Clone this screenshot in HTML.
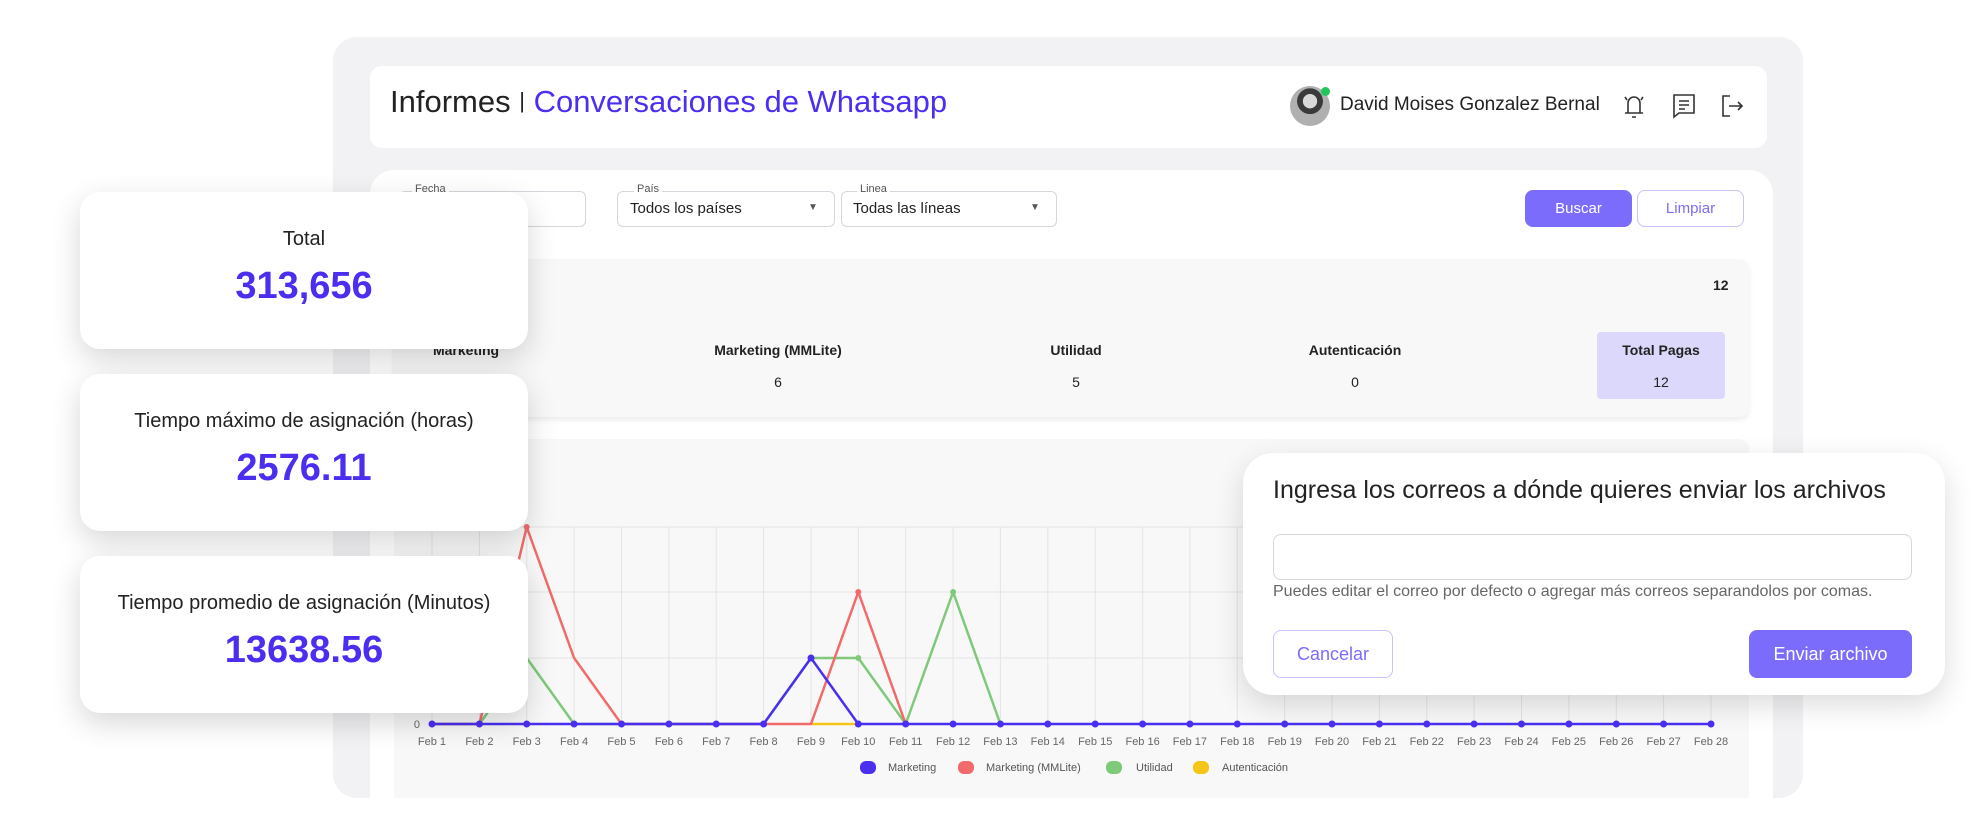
<!DOCTYPE html>
<html><head><meta charset="utf-8"><style>
*{box-sizing:border-box;margin:0;padding:0}
body{width:1980px;height:836px;background:#fff;position:relative;overflow:hidden;font-family:"Liberation Sans",sans-serif;color:#222}
.a{position:absolute}
.outer{left:333px;top:37px;width:1470px;height:761px;background:#f2f2f4;border-radius:24px}
.hdr{left:370px;top:66px;width:1397px;height:82px;background:#fff;border-radius:12px}
.filt{left:370px;top:170px;width:1403px;height:628px;background:#fff;border-radius:24px 24px 0 0}
.inp{border:1px solid #d6d6dc;border-radius:6px;height:36px;background:#fff}
.lbl{font-size:11px;color:#555;background:#fff;padding:0 3px}
.sum{left:394px;top:259px;width:1355px;height:158px;background:#f8f8f8;border-radius:10px;box-shadow:0 3px 6px rgba(0,0,0,.08)}
.chart{left:394px;top:439px;width:1355px;height:359px;background:#f8f8f8;border-radius:10px 10px 0 0}
.card{left:80px;width:448px;height:157px;background:#fff;border-radius:20px;box-shadow:0 10px 30px rgba(0,0,0,.16);text-align:center}
.card .t{font-size:20px;color:#222;margin-top:36px}
.card .v{font-size:38px;font-weight:bold;color:#4a2ff0;margin-top:14px}
.modal{left:1243px;top:453px;width:702px;height:242px;background:#fff;border-radius:30px;box-shadow:0 10px 30px rgba(0,0,0,.14)}
.btn{border-radius:8px;font-size:15px;text-align:center}
.col{font-size:14px;font-weight:bold;text-align:center;width:200px;margin-left:-100px}
.val{font-size:14px;text-align:center;width:200px;margin-left:-100px}
</style></head><body>
<div class="a outer"></div>
<div class="a hdr"></div>
<div class="a" style="left:390px;top:84px;font-size:31px;color:#222">Informes <span style="font-size:22px;position:relative;top:-4px">|</span> <span style="color:#4a2ff0">Conversaciones de Whatsapp</span></div>
<div class="a" style="left:1290px;top:86px;width:40px;height:40px;border-radius:50%;background:radial-gradient(circle at 50% 38%,#d8d8d8 0 22%,#3a3a3a 23% 40%,#b0b0b0 41%);"></div>
<div class="a" style="left:1321px;top:87px;width:9px;height:9px;border-radius:50%;background:#22c55e"></div>
<div class="a" style="left:1340px;top:94px;font-size:19px;color:#222">David Moises Gonzalez Bernal</div>
<svg class="a" style="left:1620px;top:91px" width="28" height="30" viewBox="0 0 28 30" fill="none" stroke="#333" stroke-width="1.6"><path d="M8 22V12a6 6 0 0 1 12 0v10M5 22h18M12 26h4M5 6l2 3M23 6l-2 3"/></svg>
<svg class="a" style="left:1670px;top:92px" width="28" height="28" viewBox="0 0 28 28" fill="none" stroke="#333" stroke-width="1.6"><path d="M4 3h20v18H9l-5 4zM9 9h10M9 13h10M9 17h6"/></svg>
<svg class="a" style="left:1719px;top:92px" width="26" height="28" viewBox="0 0 26 28" fill="none" stroke="#333" stroke-width="1.6"><path d="M11 4H4v20h7M10 14h13M19 10l4 4-4 4"/></svg>

<div class="a filt"></div>
<div class="a inp" style="left:399px;top:191px;width:187px"></div>
<div class="a lbl" style="left:412px;top:183px">Fecha</div>
<div class="a inp" style="left:617px;top:191px;width:218px"></div>
<div class="a lbl" style="left:634px;top:183px">País</div>
<div class="a" style="left:630px;top:200px;font-size:15px">Todos los países</div>
<div class="a" style="left:808px;top:202px;font-size:10px;color:#555">▼</div>
<div class="a inp" style="left:841px;top:191px;width:216px"></div>
<div class="a lbl" style="left:857px;top:183px">Linea</div>
<div class="a" style="left:853px;top:200px;font-size:15px">Todas las líneas</div>
<div class="a" style="left:1030px;top:202px;font-size:10px;color:#555">▼</div>
<div class="a btn" style="left:1525px;top:190px;width:107px;height:37px;background:#7b6cfb;color:#fff;line-height:37px">Buscar</div>
<div class="a btn" style="left:1637px;top:190px;width:107px;height:37px;border:1px solid #c9c2fb;color:#7b6cfb;line-height:35px;background:#fff">Limpiar</div>

<div class="a sum"></div>
<div class="a" style="left:420px;top:277px;font-size:14px;font-weight:bold">Conversaciones</div>
<div class="a" style="left:1713px;top:277px;font-size:14px;font-weight:bold">12</div>
<div class="a" style="left:1597px;top:332px;width:128px;height:67px;background:#dcd8fb;border-radius:4px"></div>
<div class="a col" style="left:466px;top:342px">Marketing</div>
<div class="a col" style="left:778px;top:342px">Marketing (MMLite)</div>
<div class="a col" style="left:1076px;top:342px">Utilidad</div>
<div class="a col" style="left:1355px;top:342px">Autenticación</div>
<div class="a col" style="left:1661px;top:342px">Total Pagas</div>
<div class="a val" style="left:466px;top:374px">1</div>
<div class="a val" style="left:778px;top:374px">6</div>
<div class="a val" style="left:1076px;top:374px">5</div>
<div class="a val" style="left:1355px;top:374px">0</div>
<div class="a val" style="left:1661px;top:374px">12</div>

<div class="a chart"></div>
<div class="a" style="left:420px;top:463px;font-size:13px;font-weight:bold">Conversaciones</div>
<svg class="a" style="left:0;top:0" width="1980" height="836" font-family="Liberation Sans, sans-serif">
<g stroke="#e4e4e4" stroke-width="1">
<line x1="432" y1="527" x2="1711" y2="527"/><line x1="432" y1="592" x2="1711" y2="592"/><line x1="432" y1="658" x2="1711" y2="658"/>
<path d="M432 527V724M479.4 527V724M526.7 527V724M574.1 527V724M621.5 527V724M668.9 527V724M716.2 527V724M763.6 527V724M811 527V724M858.3 527V724M905.7 527V724M953.1 527V724M1000.4 527V724M1047.8 527V724M1095.2 527V724M1142.6 527V724M1189.9 527V724M1237.3 527V724M1284.7 527V724M1332 527V724M1379.4 527V724M1426.8 527V724M1474.1 527V724M1521.5 527V724M1568.9 527V724M1616.3 527V724M1663.6 527V724M1711 527V724"/>
</g>
<text x="420" y="728" font-size="11" fill="#666" text-anchor="end">0</text>
<g stroke-width="2.5" fill="none" stroke-linejoin="round">
<polyline stroke="#f5c518" points="811,724 858.3,724"/>
<polyline stroke="#7fc97a" points="432,724 479.4,724 526.7,658 574.1,724 763.6,724 811,658 858.3,658 905.7,724 953.1,592 1000.4,724"/>
<polyline stroke="#f26b6b" points="432,724 479.4,724 526.7,527 574.1,658 621.5,724 811,724 858.3,592 905.7,724"/>
<polyline stroke="#4a2ff0" points="432,724 763.6,724 811,658 858.3,724 1711,724"/>
</g>
<g fill="#4a2ff0">
<circle cx="432" cy="724" r="3.5"/><circle cx="479.4" cy="724" r="3.5"/><circle cx="526.7" cy="724" r="3.5"/><circle cx="574.1" cy="724" r="3.5"/><circle cx="621.5" cy="724" r="3.5"/><circle cx="668.9" cy="724" r="3.5"/><circle cx="716.2" cy="724" r="3.5"/><circle cx="763.6" cy="724" r="3.5"/><circle cx="811" cy="658" r="3.5"/><circle cx="858.3" cy="724" r="3.5"/><circle cx="905.7" cy="724" r="3.5"/><circle cx="953.1" cy="724" r="3.5"/><circle cx="1000.4" cy="724" r="3.5"/><circle cx="1047.8" cy="724" r="3.5"/><circle cx="1095.2" cy="724" r="3.5"/><circle cx="1142.6" cy="724" r="3.5"/><circle cx="1189.9" cy="724" r="3.5"/><circle cx="1237.3" cy="724" r="3.5"/><circle cx="1284.7" cy="724" r="3.5"/><circle cx="1332" cy="724" r="3.5"/><circle cx="1379.4" cy="724" r="3.5"/><circle cx="1426.8" cy="724" r="3.5"/><circle cx="1474.1" cy="724" r="3.5"/><circle cx="1521.5" cy="724" r="3.5"/><circle cx="1568.9" cy="724" r="3.5"/><circle cx="1616.3" cy="724" r="3.5"/><circle cx="1663.6" cy="724" r="3.5"/><circle cx="1711" cy="724" r="3.5"/>
</g>
<circle cx="526.7" cy="527" r="3" fill="#f26b6b"/><circle cx="858.3" cy="592" r="3" fill="#f26b6b"/><circle cx="953.1" cy="592" r="3" fill="#7fc97a"/><circle cx="858.3" cy="658" r="3" fill="#7fc97a"/>
<g font-size="11" fill="#666" text-anchor="middle">
<text x="432" y="745">Feb 1</text><text x="479.4" y="745">Feb 2</text><text x="526.7" y="745">Feb 3</text><text x="574.1" y="745">Feb 4</text><text x="621.5" y="745">Feb 5</text><text x="668.9" y="745">Feb 6</text><text x="716.2" y="745">Feb 7</text><text x="763.6" y="745">Feb 8</text><text x="811" y="745">Feb 9</text><text x="858.3" y="745">Feb 10</text><text x="905.7" y="745">Feb 11</text><text x="953.1" y="745">Feb 12</text><text x="1000.4" y="745">Feb 13</text><text x="1047.8" y="745">Feb 14</text><text x="1095.2" y="745">Feb 15</text><text x="1142.6" y="745">Feb 16</text><text x="1189.9" y="745">Feb 17</text><text x="1237.3" y="745">Feb 18</text><text x="1284.7" y="745">Feb 19</text><text x="1332" y="745">Feb 20</text><text x="1379.4" y="745">Feb 21</text><text x="1426.8" y="745">Feb 22</text><text x="1474.1" y="745">Feb 23</text><text x="1521.5" y="745">Feb 24</text><text x="1568.9" y="745">Feb 25</text><text x="1616.3" y="745">Feb 26</text><text x="1663.6" y="745">Feb 27</text><text x="1711" y="745">Feb 28</text>
</g>
<g font-size="11" fill="#555">
<rect x="860" y="761" width="16" height="13" rx="6" fill="#4a2ff0"/><text x="888" y="771">Marketing</text>
<rect x="958" y="761" width="16" height="13" rx="6" fill="#f26b6b"/><text x="986" y="771">Marketing (MMLite)</text>
<rect x="1106" y="761" width="16" height="13" rx="6" fill="#7fc97a"/><text x="1136" y="771">Utilidad</text>
<rect x="1193" y="761" width="16" height="13" rx="6" fill="#f5c518"/><text x="1222" y="771">Autenticación</text>
</g>
</svg>

<div class="a card" style="top:192px"><div class="t">Total</div><div class="v">313,656</div></div>
<div class="a card" style="top:374px"><div class="t">Tiempo máximo de asignación (horas)</div><div class="v">2576.11</div></div>
<div class="a card" style="top:556px"><div class="t">Tiempo promedio de asignación (Minutos)</div><div class="v">13638.56</div></div>

<div class="a modal"></div>
<div class="a" style="left:1273px;top:476px;font-size:25px;color:#222;white-space:nowrap">Ingresa los correos a dónde quieres enviar los archivos</div>
<div class="a" style="left:1273px;top:534px;width:639px;height:46px;border:1px solid #d6d6dc;border-radius:8px"></div>
<div class="a" style="left:1273px;top:583px;font-size:16px;color:#666;white-space:nowrap">Puedes editar el correo por defecto o agregar más correos separandolos por comas.</div>
<div class="a btn" style="left:1273px;top:630px;width:120px;height:48px;border:1px solid #c9c2fb;color:#7b6cfb;line-height:46px;font-size:18px">Cancelar</div>
<div class="a btn" style="left:1749px;top:630px;width:163px;height:48px;background:#7b6cfb;color:#fff;line-height:48px;font-size:18px">Enviar archivo</div>
</body></html>
